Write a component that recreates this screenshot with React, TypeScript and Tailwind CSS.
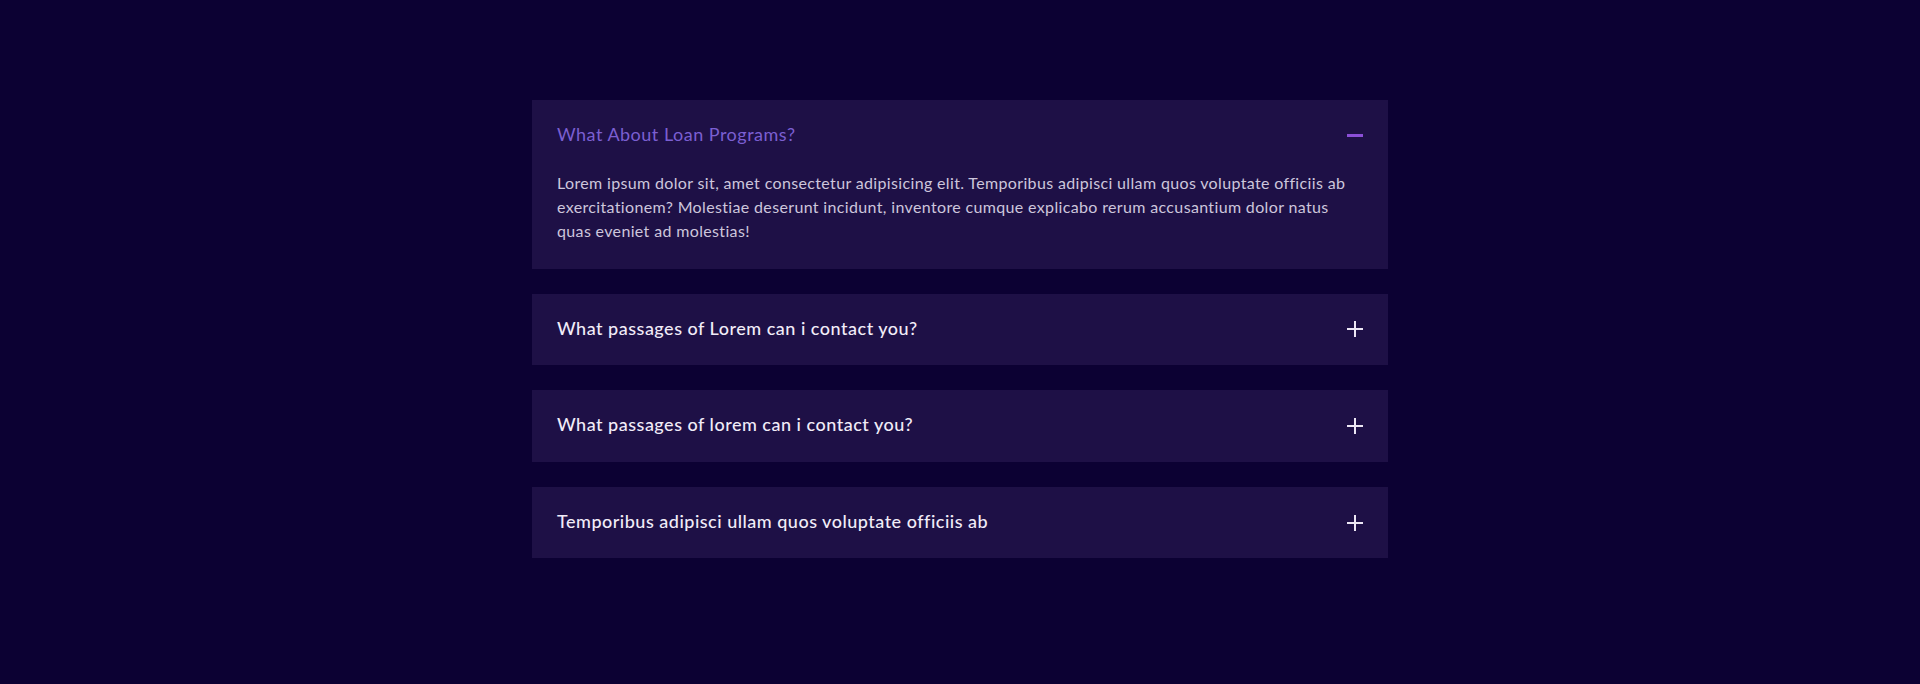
import React, { useState } from "react";

const items = [
  {
    q: "What About Loan Programs?",
    a: "Lorem ipsum dolor sit, amet consectetur adipisicing elit. Temporibus adipisci ullam quos voluptate officiis ab exercitationem? Molestiae deserunt incidunt, inventore cumque explicabo rerum accusantium dolor natus quas eveniet ad molestias!",
  },
  {
    q: "What passages of Lorem can i contact you?",
    a: "Lorem ipsum dolor sit, amet consectetur adipisicing elit. Temporibus adipisci ullam quos voluptate officiis ab exercitationem?",
  },
  {
    q: "What passages of lorem can i contact you?",
    a: "Lorem ipsum dolor sit, amet consectetur adipisicing elit. Temporibus adipisci ullam quos voluptate officiis ab exercitationem?",
  },
  {
    q: "Temporibus adipisci ullam quos voluptate officiis ab",
    a: "Lorem ipsum dolor sit, amet consectetur adipisicing elit. Temporibus adipisci ullam quos voluptate officiis ab exercitationem?",
  },
];

export default function App() {
  const [open, setOpen] = useState<number>(0);
  return (
    <div
      className="min-h-screen w-full bg-[#0c0133] pt-[100px]"
      style={{ fontFamily: "Lato, 'Noto Sans', sans-serif" }}
    >
      <div className="mx-auto flex w-[856px] flex-col gap-[25px]">
        {items.map((it, i) => {
          const isOpen = open === i;
          return (
            <div key={i} className="bg-[#1e1046]">
              <button
                onClick={() => setOpen(isOpen ? -1 : i)}
                className="flex w-full items-center justify-between px-[25px] py-[25px] text-left"
              >
                <span
                  className={
                    "relative top-[-1px] text-[18px] leading-[21.6px] tracking-[0.5px] " +
                    (isOpen ? "text-[#7b5fd2] font-normal" : "text-[#f1ecf8] font-medium")
                  }
                >
                  {it.q}
                </span>
                {isOpen ? (
                  <span className="block h-[3px] w-[16px] bg-[#8c4fd8]" />
                ) : (
                  <svg width="16" height="16" viewBox="0 0 16 16" className="block">
                    <rect x="0" y="7" width="16" height="2" fill="#ece6f4" />
                    <rect x="7" y="0" width="2" height="16" fill="#ece6f4" />
                  </svg>
                )}
              </button>
              {isOpen && (
                <div className="px-[25px] pb-[25px] text-[16px] leading-[24px] tracking-[0.35px] font-normal text-[#cdc6dc]">
                  <p className="relative top-[-1px]">{it.a}</p>
                </div>
              )}
            </div>
          );
        })}
      </div>
    </div>
  );
}
